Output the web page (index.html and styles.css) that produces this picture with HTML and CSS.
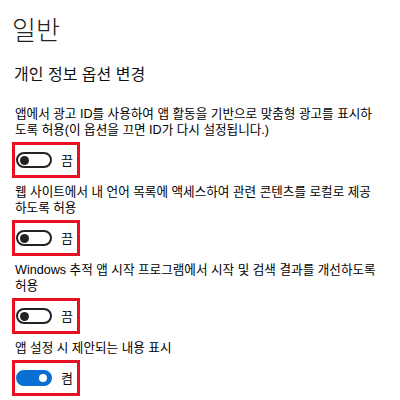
FILE: index.html
```html
<!DOCTYPE html>
<html lang="ko">
<head>
<meta charset="utf-8">
<title>일반</title>
<link rel="stylesheet" href="styles.css">
</head>
<body>
<main class="page">
  <h1 class="title">일반</h1>
  <h2 class="subtitle">개인 정보 옵션 변경</h2>

  <section class="option">
    <p class="desc">앱에서 광고 ID를 사용하여 앱 활동을 기반으로 맞춤형 광고를 표시하<br>도록 허용(이 옵션을 끄면 ID가 다시 설정됩니다.)</p>
    <div class="toggle-box">
      <span class="switch"><span class="knob"></span></span>
      <span class="state">끔</span>
    </div>
  </section>

  <section class="option">
    <p class="desc">웹 사이트에서 내 언어 목록에 액세스하여 관련 콘텐츠를 로컬로 제공<br>하도록 허용</p>
    <div class="toggle-box">
      <span class="switch"><span class="knob"></span></span>
      <span class="state">끔</span>
    </div>
  </section>

  <section class="option">
    <p class="desc">Windows 추적 앱 시작 프로그램에서 시작 및 검색 결과를 개선하도록<br>허용</p>
    <div class="toggle-box">
      <span class="switch"><span class="knob"></span></span>
      <span class="state">끔</span>
    </div>
  </section>

  <section class="option">
    <p class="desc">앱 설정 시 제안되는 내용 표시</p>
    <div class="toggle-box">
      <span class="switch on"><span class="knob"></span></span>
      <span class="state">켬</span>
    </div>
  </section>
</main>
</body>
</html>
```

FILE: styles.css
```css
html, body {
  margin: 0;
  padding: 0;
  background: #ffffff;
}

body {
  font-family: "Noto Sans CJK KR", "Noto Sans", sans-serif;
  color: #000000;
}

.page {
  padding: 12px 12px 0 12px;
  display: flex;
  flex-direction: column;
}

.title {
  margin: 0;
  padding-left: 0;
  font-size: 26px;
  font-weight: 300;
  line-height: 34px;
  color: #222222;
}

.subtitle {
  margin: 16px 0 0 0;
  padding-left: 2px;
  font-size: 16px;
  font-weight: 400;
  line-height: 22px;
  color: #111111;
}

.option {
  display: flex;
  flex-direction: column;
  align-items: flex-start;
  margin-bottom: 6px;
}

.subtitle + .option {
  margin-top: 22px;
}

.desc {
  margin: 0;
  padding-left: 3px;
  font-family: "Liberation Sans", "Noto Sans CJK KR", sans-serif;
  font-size: 12.6px;
  line-height: 16px;
  white-space: nowrap;
}

.toggle-box {
  margin-top: 4px;
  box-sizing: border-box;
  width: 68px;
  height: 36px;
  border: 3px solid #e81123;
  display: flex;
  align-items: center;
  padding-left: 1px;
  gap: 9px;
}

.switch {
  box-sizing: border-box;
  width: 36px;
  height: 16px;
  border: 2px solid #222222;
  border-radius: 8px;
  background: #ffffff;
  display: flex;
  align-items: center;
  padding: 0 1.5px;
}

.knob {
  width: 9px;
  height: 9px;
  border-radius: 50%;
  background: #222222;
}

.switch.on {
  background: #0a6fd3;
  border-color: #0a6fd3;
  justify-content: flex-end;
  padding-right: 3px;
}

.switch.on .knob {
  width: 8px;
  height: 8px;
  background: #ffffff;
}

.state {
  font-size: 13px;
  line-height: 16px;
  color: #111111;
}
```
